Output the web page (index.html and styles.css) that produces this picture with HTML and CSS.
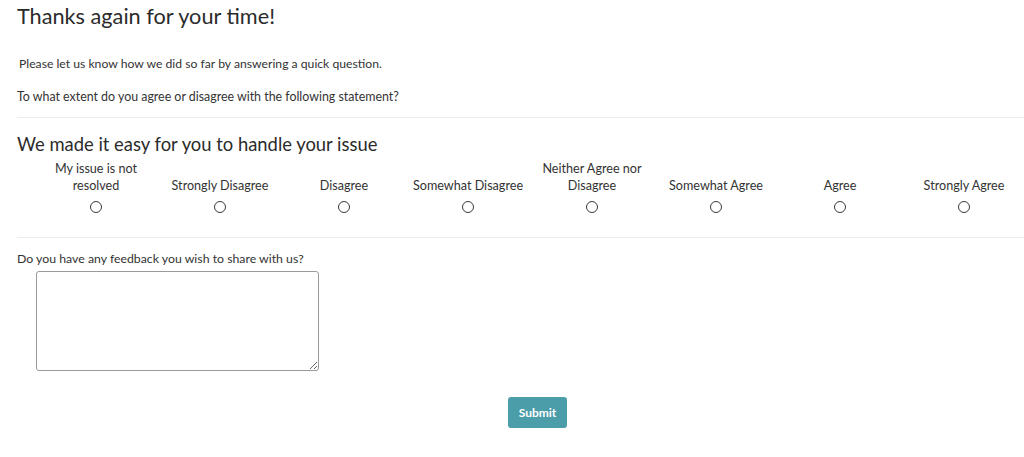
FILE: index.html
```html
<!DOCTYPE html>
<html>
<head>
<meta charset="utf-8">
<link rel="stylesheet" href="styles.css">
</head>
<body>
<div class="page">
  <h1 class="title">Thanks again for your time!</h1>
  <p class="intro">Please let us know how we did so far by answering a quick question.</p>
  <p class="prompt">To what extent do you agree or disagree with the following statement?</p>
  <hr class="divider">
  <h2 class="statement">We made it easy for you to handle your issue</h2>
  <div class="scale">
    <label class="opt"><span class="lbl">My issue is not resolved</span><span class="radio"></span></label>
    <label class="opt"><span class="lbl">Strongly Disagree</span><span class="radio"></span></label>
    <label class="opt"><span class="lbl">Disagree</span><span class="radio"></span></label>
    <label class="opt"><span class="lbl">Somewhat Disagree</span><span class="radio"></span></label>
    <label class="opt"><span class="lbl">Neither Agree nor Disagree</span><span class="radio"></span></label>
    <label class="opt"><span class="lbl">Somewhat Agree</span><span class="radio"></span></label>
    <label class="opt"><span class="lbl">Agree</span><span class="radio"></span></label>
    <label class="opt"><span class="lbl">Strongly Agree</span><span class="radio"></span></label>
  </div>
  <hr class="divider divider2">
  <p class="feedback-q">Do you have any feedback you wish to share with us?</p>
  <textarea class="feedback"></textarea>
  <div class="actions"><button class="submit">Submit</button></div>
</div>
</body>
</html>
```
FILE: styles.css
```css
html, body {
  margin: 0;
  padding: 0;
  background: #ffffff;
}
body {
  font-family: Lato, "Open Sans", sans-serif;
  color: #333333;
}
.page {
  padding: 0 0 0 17px;
  overflow: hidden;
}
.title {
  margin: 0;
  padding-top: 3px;
  font-size: 21.7px;
  font-weight: 400;
  line-height: 27px;
  color: #2b2b2b;
}
.intro {
  margin: 26px 0 0 2px;
  font-size: 12.2px;
  line-height: 15px;
}
.prompt {
  margin: 18px 0 0 0;
  font-size: 12.4px;
  line-height: 15px;
}
.divider {
  margin: 13px 0 0 0;
  border: 0;
  border-top: 1px solid #ececec;
}
.statement {
  margin: 15px 0 0 0;
  font-size: 18.4px;
  font-weight: 400;
  line-height: 22px;
  color: #2b2b2b;
}
.scale {
  display: grid;
  grid-template-columns: repeat(8, 124px);
  margin: 5px 0 0 17px;
  width: 992px;
}
.opt {
  display: flex;
  flex-direction: column;
  align-items: center;
  justify-content: flex-end;
  font-size: 12.6px;
  line-height: 17px;
  text-align: center;
}
.lbl {
  display: block;
  width: 120px;
}
.radio {
  display: block;
  width: 10px;
  height: 10px;
  border: 1.5px solid #3a3a3a;
  border-radius: 50%;
  margin-top: 7px;
}
.divider2 {
  margin-top: 24px;
}
.feedback-q {
  margin: 13px 0 0 0;
  font-size: 12.3px;
  line-height: 15px;
}
.feedback {
  display: block;
  box-sizing: border-box;
  margin: 5px 0 0 19px;
  width: 283px;
  height: 100px;
  border: 1.5px solid #9a9a9a;
  border-radius: 3px;
  resize: vertical;
  background: #fff;
}
.actions {
  display: flex;
  margin-top: 26px;
  padding-left: 491px;
}
.submit {
  width: 59px;
  height: 31px;
  border: 0;
  border-radius: 3px;
  background: #4c9daa;
  color: #ffffff;
  font-family: Lato, sans-serif;
  font-weight: 700;
  font-size: 12px;
  padding: 0;
}
```
